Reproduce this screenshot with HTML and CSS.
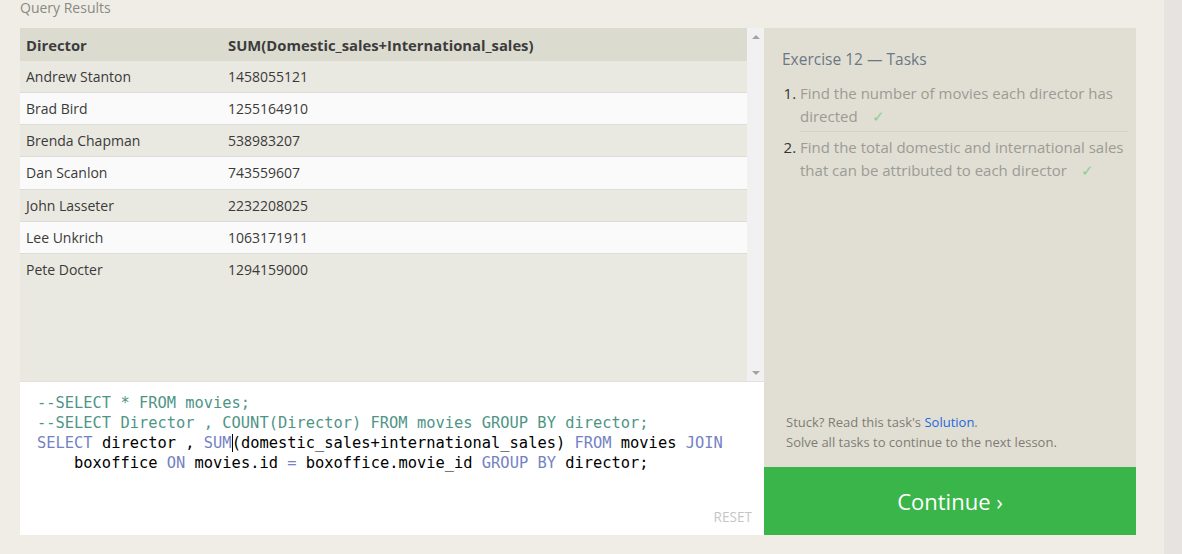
FILE: index.html
```html
<!DOCTYPE html>
<html>
<head>
<meta charset="utf-8">
<link rel="stylesheet" href="styles.css">
</head>
<body>
<div class="main">
  <div class="title">Query Results</div>
  <div class="workspace">
    <div class="left">
      <div class="results">
        <div class="table-area">
          <table class="grid">
            <thead>
              <tr><th class="c1">Director</th><th>SUM(Domestic_sales+International_sales)</th></tr>
            </thead>
            <tbody>
              <tr class="odd"><td>Andrew Stanton</td><td>1458055121</td></tr>
              <tr class="even"><td>Brad Bird</td><td>1255164910</td></tr>
              <tr class="odd"><td>Brenda Chapman</td><td>538983207</td></tr>
              <tr class="even"><td>Dan Scanlon</td><td>743559607</td></tr>
              <tr class="odd"><td>John Lasseter</td><td>2232208025</td></tr>
              <tr class="even"><td>Lee Unkrich</td><td>1063171911</td></tr>
              <tr class="odd"><td>Pete Docter</td><td>1294159000</td></tr>
            </tbody>
          </table>
        </div>
        <div class="scrollbar">
          <span class="arrow up"></span>
          <span class="arrow down"></span>
        </div>
      </div>
      <div class="editor">
        <pre class="code"><span class="cm">--SELECT * FROM movies;</span>
<span class="cm">--SELECT Director , COUNT(Director) FROM movies GROUP BY director;</span>
<span class="kw">SELECT</span> director , <span class="kw">SUM</span><span class="cursor"></span>(domestic_sales+international_sales) <span class="kw">FROM</span> movies <span class="kw">JOIN</span>
    boxoffice <span class="kw">ON</span> movies.id <span class="kw">=</span> boxoffice.movie_id <span class="kw">GROUP BY</span> director;</pre>
        <div class="reset">RESET</div>
      </div>
    </div>
    <div class="right">
      <div class="panel">
        <div class="tasks">
          <div class="tasks-title">Exercise 12 — Tasks</div>
          <ol class="task-list">
            <li class="task sep">Find the number of movies each director has directed <span class="check">✓</span></li>
            <li class="task">Find the total domestic and international sales that can be attributed to each director <span class="check">✓</span></li>
          </ol>
        </div>
        <div class="help">
          <div>Stuck? Read this task's <span class="link">Solution</span>.</div>
          <div>Solve all tasks to continue to the next lesson.</div>
        </div>
      </div>
      <div class="continue">Continue ›</div>
    </div>
  </div>
</div>
<div class="strip"></div>
</body>
</html>
```
FILE: styles.css
```css
html, body {
  margin: 0;
  padding: 0;
  height: 100%;
}
body {
  background: #f0ede6;
  display: flex;
  font-family: "Open Sans", "Noto Sans", sans-serif;
  overflow: hidden;
}
.main {
  width: 1164px;
  padding-left: 20px;
  box-sizing: border-box;
}
.strip {
  flex: 1;
  background: #e7e3e0;
}
.title {
  font-size: 14px;
  color: #8a8983;
  line-height: 16px;
  height: 28px;
}
.workspace {
  display: flex;
  width: 1116px;
}
.left {
  width: 744px;
  display: flex;
  flex-direction: column;
}
.results {
  height: 354px;
  display: flex;
  background: #eae9e1;
  border-bottom: 1px solid #e2e1da;
  box-sizing: border-box;
}
.table-area {
  width: 727px;
}
.grid {
  width: 100%;
  border-collapse: collapse;
  font-size: 14px;
  color: #3a3a3a;
}
.grid th {
  background: #dcdbd0;
  text-align: left;
  font-weight: 700;
  font-size: 14.8px;
  height: 33px;
  padding: 0 6px;
  color: #3c3c3c;
}
.grid th.c1 {
  width: 190px;
}
.grid td {
  height: 31.15px;
  padding: 0 6px;
  border-bottom: 1px solid #dcdcd8;
}
.grid tr.odd td {
  background: #eae9e1;
}
.grid tr.even td {
  background: #fafafa;
}
.grid tr:last-child td {
  border-bottom: none;
}
.scrollbar {
  width: 17px;
  background: #f1f1f1;
  display: flex;
  flex-direction: column;
  justify-content: space-between;
  align-items: center;
  padding: 7px 0 6px;
  box-sizing: border-box;
}
.arrow {
  width: 0;
  height: 0;
  border-left: 4px solid transparent;
  border-right: 4px solid transparent;
}
.arrow.up {
  border-bottom: 4px solid #a3a3a3;
}
.arrow.down {
  border-top: 4px solid #a3a3a3;
}
.editor {
  height: 153px;
  background: #ffffff;
  display: flex;
  flex-direction: column;
  justify-content: space-between;
}
.code {
  margin: 0;
  padding: 11px 0 0 17px;
  font-family: "DejaVu Sans Mono", "Liberation Mono", monospace;
  font-size: 15.4px;
  line-height: 20px;
  color: #000;
}
.cm {
  color: #4f9586;
}
.kw {
  color: #7482c4;
}
.cursor {
  display: inline-block;
  width: 0;
  height: 18px;
  border-left: 1.5px solid #000;
  vertical-align: -4px;
  margin-right: -1px;
}
.reset {
  align-self: flex-end;
  font-size: 13.6px;
  color: #c6c6c6;
  padding: 0 12px 9px 0;
}
.right {
  width: 372px;
  display: flex;
  flex-direction: column;
}
.panel {
  height: 439px;
  background: #e1dfd3;
  display: flex;
  flex-direction: column;
  justify-content: space-between;
  padding: 20px 8px 15px 18px;
  box-sizing: border-box;
}
.tasks-title {
  font-size: 15.5px;
  color: #6c7786;
  line-height: 22px;
}
.task-list {
  margin: 8px 0 0 0;
  padding: 0 0 0 18px;
  font-size: 15px;
  color: #9c9b95;
  line-height: 23px;
}
.task {
  padding: 4px 0 4px 0;
}
.task::marker {
  color: #333;
}
.task.sep {
  padding-bottom: 3px;
  border-bottom: 1px solid #d5d3c8;
}
.check {
  color: #8ccf8c;
  margin-left: 10px;
  font-size: 15px;
  line-height: 1;
}
.help {
  font-size: 13px;
  line-height: 20px;
  color: #7f7c76;
  padding-left: 4px;
}
.link {
  color: #2566df;
}
.continue {
  height: 68px;
  background: #3ab54a;
  color: #ffffff;
  font-size: 22px;
  display: flex;
  align-items: center;
  justify-content: center;
}
```
